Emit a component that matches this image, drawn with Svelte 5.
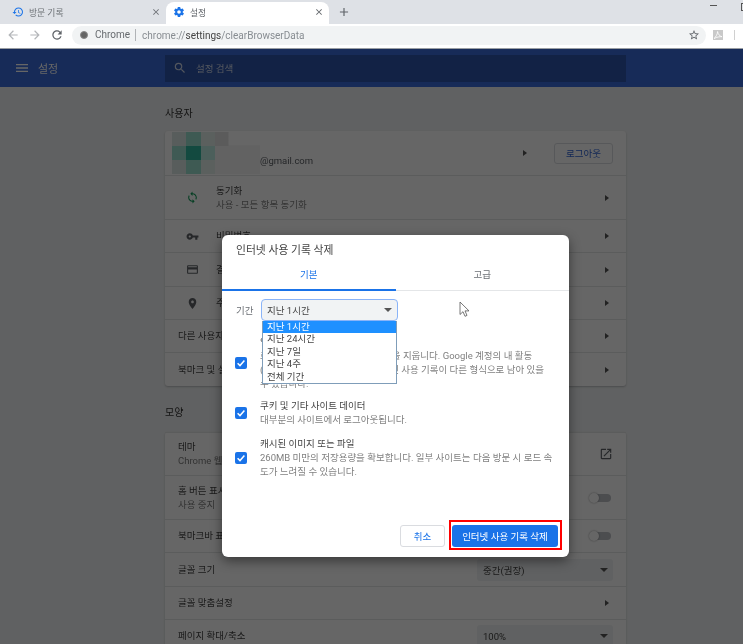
<script>
    const paths = {
        history: "M13 3a9 9 0 0 0-9 9H1l3.89 3.89.07.14L9 12H6c0-3.87 3.13-7 7-7s7 3.13 7 7-3.13 7-7 7c-1.93 0-3.68-.79-4.94-2.06l-1.42 1.42A8.954 8.954 0 0 0 13 21a9 9 0 0 0 0-18zm-1 5v5l4.28 2.54.72-1.21-3.5-2.08V8H12z",
        gear: "M19.43 12.98c.04-.32.07-.64.07-.98s-.03-.66-.07-.98l2.11-1.65c.19-.15.24-.42.12-.64l-2-3.46c-.12-.22-.39-.3-.61-.22l-2.49 1c-.52-.4-1.08-.73-1.69-.98l-.38-2.65C14.46 2.18 14.25 2 14 2h-4c-.25 0-.46.18-.49.42l-.38 2.65c-.61.25-1.17.59-1.69.98l-2.49-1c-.23-.09-.49 0-.61.22l-2 3.46c-.13.22-.07.49.12.64l2.11 1.65c-.04.32-.07.65-.07.98s.03.66.07.98l-2.11 1.65c-.19.15-.24.42-.12.64l2 3.46c.12.22.39.3.61.22l2.49-1c.52.4 1.08.73 1.69.98l.38 2.65c.03.24.24.42.49.42h4c.25 0 .46-.18.49-.42l.38-2.65c.61-.25 1.17-.59 1.69-.98l2.49 1c.23.09.49 0 .61-.22l2-3.46c.12-.22.07-.49-.12-.64l-2.11-1.65zM12 15.5c-1.93 0-3.5-1.57-3.5-3.5s1.57-3.5 3.5-3.5 3.5 1.57 3.5 3.5-1.57 3.5-3.5 3.5z",
        close: "M19 6.41L17.59 5 12 10.59 6.41 5 5 6.41 10.59 12 5 17.59 6.41 19 12 13.41 17.59 19 19 17.59 13.41 12z",
        plus: "M19 13h-6v6h-2v-6H5v-2h6V5h2v6h6v2z",
        back: "M20 11H7.83l5.59-5.59L12 4l-8 8 8 8 1.41-1.41L7.83 13H20v-2z",
        forward: "M12 4l-1.41 1.41L16.17 11H4v2h12.17l-5.58 5.59L12 20l8-8z",
        reload: "M17.65 6.35A7.958 7.958 0 0 0 12 4c-4.42 0-7.99 3.58-7.99 8s3.57 8 7.99 8c3.73 0 6.84-2.55 7.73-6h-2.08A5.99 5.99 0 0 1 12 18c-3.31 0-6-2.69-6-6s2.69-6 6-6c1.66 0 3.14.69 4.22 1.78L13 11h7V4l-2.35 2.35z",
        star: "M22 9.24l-7.19-.62L12 2 9.19 8.63 2 9.24l5.46 4.73L5.82 21 12 17.27 18.18 21l-1.63-7.03L22 9.24zM12 15.4l-3.76 2.27 1-4.28-3.32-2.88 4.38-.38L12 6.1l1.71 4.04 4.38.38-3.32 2.88 1 4.28L12 15.4z",
        menu: "M3 18h18v-2H3v2zm0-5h18v-2H3v2zm0-7v2h18V6H3z",
        search: "M15.5 14h-.79l-.28-.27A6.471 6.471 0 0 0 16 9.5 6.5 6.5 0 1 0 9.5 16c1.61 0 3.09-.59 4.23-1.57l.27.28v.79l5 4.99L20.49 19l-4.99-5zm-6 0C7.01 14 5 11.99 5 9.5S7.01 5 9.5 5 14 7.01 14 9.5 11.99 14 9.5 14z",
        sync: "M12 4V1L8 5l4 4V6c3.31 0 6 2.69 6 6 0 1.01-.25 1.97-.7 2.8l1.46 1.46C19.54 15.03 20 13.57 20 12c0-4.42-3.58-8-8-8zm0 14c-3.31 0-6-2.69-6-6 0-1.01.25-1.97.7-2.8L5.24 7.74C4.46 8.97 4 10.43 4 12c0 4.42 3.58 8 8 8v3l4-4-4-4v3z",
        key: "M12.65 10C11.83 7.67 9.61 6 7 6c-3.31 0-6 2.69-6 6s2.69 6 6 6c2.61 0 4.83-1.67 5.65-4H17v4h4v-4h2v-4H12.65zM7 14c-1.1 0-2-.9-2-2s.9-2 2-2 2 .9 2 2-.9 2-2 2z",
        card: "M20 4H4c-1.11 0-1.99.89-1.99 2L2 18c0 1.11.89 2 2 2h16c1.11 0 2-.89 2-2V6c0-1.11-.89-2-2-2zm0 14H4v-6h16v6zm0-10H4V6h16v2z",
        place: "M12 2C8.13 2 5 5.13 5 9c0 5.25 7 13 7 13s7-7.75 7-13c0-3.87-3.13-7-7-7zm0 9.5c-1.38 0-2.5-1.12-2.5-2.5s1.12-2.5 2.5-2.5 2.5 1.12 2.5 2.5-1.12 2.5-2.5 2.5z",
        external: "M19 19H5V5h7V3H5c-1.11 0-2 .9-2 2v14c0 1.1.89 2 2 2h14c1.1 0 2-.9 2-2v-7h-2v7zM14 3v2h3.59l-9.83 9.83 1.41 1.41L19 6.41V10h2V3h-7z"
    };

    const userRows = [
        { h: 44, icon: "sync", title: "동기화", sub: "사용 - 모든 항목 동기화", green: true },
        { h: 33, icon: "key", title: "비밀번호" },
        { h: 34, icon: "card", title: "결제 수단" },
        { h: 33, icon: "place", title: "주소 및 기타" },
        { h: 33, title: "다른 사용자" },
        { h: 34, title: "북마크 및 설정 가져오기" }
    ];

    const lookRows = [
        { h: 43, title: "테마", sub: "Chrome 웹 스토어 열기", right: "external" },
        { h: 44, title: "홈 버튼 표시", sub: "사용 중지", right: "toggle" },
        { h: 33, title: "북마크바 표시", right: "toggle" },
        { h: 34, title: "글꼴 크기", right: "select", value: "중간(권장)" },
        { h: 33, title: "글꼴 맞춤설정" },
        { h: 33, title: "페이지 확대/축소", right: "select", value: "100%" }
    ];

    const periods = ["지난 1시간", "지난 24시간", "지난 7일", "지난 4주", "전체 기간"];

    const mosaic = ["#dce8e6", "#9be0d0", "#e4efec", "#9fe0d2", "#30b9a0", "#bfeee4", "#dce8e6", "#9be0d0", "#e4efec"];
</script>

{#snippet icon(name, cls)}
    <svg class={cls} viewBox="0 0 24 24"><path d={paths[name]} /></svg>
{/snippet}

{#snippet row(item)}
    <div class="row" style="height: {item.h}px">
        {#if item.icon}
            <span class="row-icon" class:green={item.green}>{@render icon(item.icon, "ic13")}</span>
        {/if}
        <div class="row-text">
            <div class="row-title">{item.title}</div>
            {#if item.sub}<div class="row-sub">{item.sub}</div>{/if}
        </div>
        {#if item.right === "external"}
            <span class="row-end">{@render icon("external", "ic14")}</span>
        {:else if item.right === "toggle"}
            <span class="toggle"><i></i></span>
        {:else if item.right === "select"}
            <div class="page-select">{item.value}<b class="caret"></b></div>
        {:else}
            <b class="arrow"></b>
        {/if}
    </div>
{/snippet}

<div class="window">
    <div class="tabstrip">
        <div class="tab">
            <span class="tab-fav">{@render icon("history", "ic12")}</span>
            <span class="tab-name">방문 기록</span>
            {@render icon("close", "ic10")}
        </div>
        <div class="tab active">
            <span class="tab-fav">{@render icon("gear", "ic12")}</span>
            <span class="tab-name">설정</span>
            {@render icon("close", "ic10")}
        </div>
        <span class="new-tab">{@render icon("plus", "ic14")}</span>
        <span class="minimize"></span>
        <span class="maximize"></span>
    </div>

    <div class="toolbar">
        <span class="nav dim">{@render icon("back", "ic14")}</span>
        <span class="nav dim">{@render icon("forward", "ic14")}</span>
        <span class="nav">{@render icon("reload", "ic14")}</span>
        <div class="omnibox">
            <span class="chrome-dot"></span>
            <span class="scheme">Chrome</span>
            <span class="url">chrome://<em>settings</em>/clearBrowserData</span>
            <span class="star">{@render icon("star", "ic12")}</span>
        </div>
        <span class="ext"><svg viewBox="0 0 10 10"><path d="M1 8.5C3 7 4.5 4 4.6 1.5c.3 2.6 2 4.6 4.4 5.2-2-.2-5 .3-8 1.8z" fill="none" stroke="#fff" stroke-width=".8" /></svg></span>
        <span class="kebab"></span>
    </div>

    <div class="page">
        <header class="page-header">
            <span class="hamburger">{@render icon("menu", "ic16")}</span>
            <span class="page-title">설정</span>
            <div class="search">
                {@render icon("search", "ic14")}
                <span>설정 검색</span>
            </div>
        </header>

        <main class="content">
            <h2>사용자</h2>
            <section class="card">
                <div class="account">
                    <div class="mosaic">
                        {#each mosaic as colour}
                            <span style="background: {colour}"></span>
                        {/each}
                    </div>
                    <div class="blot"></div>
                    <span class="email">@gmail.com</span>
                    <b class="arrow"></b>
                    <span class="signout">로그아웃</span>
                </div>
                {#each userRows as item}
                    {@render row(item)}
                {/each}
            </section>

            <h2 class="second">모양</h2>
            <section class="card">
                {#each lookRows as item}
                    {@render row(item)}
                {/each}
            </section>
        </main>

        <div class="scrim"></div>

        <div class="dialog">
            <div class="dialog-title">인터넷 사용 기록 삭제</div>
            <div class="tabs">
                <span class="dialog-tab current">기본</span>
                <span class="dialog-tab">고급</span>
            </div>

            <div class="period">
                <label for="period-select">기간</label>
                <div class="select-wrap">
                    <div class="select" id="period-select">지난 1시간<b class="caret"></b></div>
                    <ul class="options">
                        {#each periods as option, i}
                            <li class:selected={i === 0}>{option}</li>
                        {/each}
                    </ul>
                </div>
            </div>

            <div class="check-row first">
                <span class="check"><svg viewBox="0 0 12 12"><path d="M2.6 6.2l2.4 2.4 4.4-5" fill="none" stroke="#fff" stroke-width="1.5" /></svg></span>
                <div>
                    <div class="check-title">인터넷 사용 기록</div>
                    <div class="check-desc">로그인한 모든 기기에서 방문 기록을 지웁니다. Google 계정의 내 활동<br />(myactivity.google.com)에 인터넷 사용 기록이 다른 형식으로 남아 있을<br />수 있습니다.</div>
                </div>
            </div>
            <div class="check-row cookies">
                <span class="check"><svg viewBox="0 0 12 12"><path d="M2.6 6.2l2.4 2.4 4.4-5" fill="none" stroke="#fff" stroke-width="1.5" /></svg></span>
                <div>
                    <div class="check-title">쿠키 및 기타 사이트 데이터</div>
                    <div class="check-desc">대부분의 사이트에서 로그아웃됩니다.</div>
                </div>
            </div>
            <div class="check-row cache">
                <span class="check"><svg viewBox="0 0 12 12"><path d="M2.6 6.2l2.4 2.4 4.4-5" fill="none" stroke="#fff" stroke-width="1.5" /></svg></span>
                <div>
                    <div class="check-title">캐시된 이미지 또는 파일</div>
                    <div class="check-desc">260MB 미만의 저장용량을 확보합니다. 일부 사이트는 다음 방문 시 로드 속<br />도가 느려질 수 있습니다.</div>
                </div>
            </div>

            <div class="actions">
                <button class="cancel">취소</button>
                <button class="confirm">인터넷 사용 기록 삭제</button>
            </div>
        </div>

        <svg class="cursor" viewBox="0 0 11 17">
            <path d="M1 1v12.5l3-2.8 2 4.6 2-.9-2-4.5h4z" fill="#fff" stroke="#555" stroke-width=".8" />
        </svg>
    </div>
</div>

<style>
    :global(body) {
        margin: 0;
        overflow: hidden;
        background: #636565;
    }
    .window {
        width: 743px;
        height: 644px;
        overflow: hidden;
        font-family: Roboto, "Noto Sans CJK KR", sans-serif;
        color: #444;
        filter: blur(0.3px);
    }
    svg {
        display: block;
        fill: currentColor;
    }
    :global(.ic10) { width: 10px; height: 10px; }
    :global(.ic12) { width: 12px; height: 12px; }
    :global(.ic13) { width: 13px; height: 13px; }
    :global(.ic14) { width: 14px; height: 14px; }
    :global(.ic16) { width: 16px; height: 16px; }

    .tabstrip {
        height: 24px;
        background: #dee1e6;
        display: flex;
        align-items: flex-end;
        position: relative;
    }
    .tab {
        width: 166px;
        height: 22px;
        box-sizing: border-box;
        display: flex;
        align-items: center;
        padding: 0 5px 2px 12px;
        color: #6b6f74;
        font-size: 8.8px;
    }
    .tab.active {
        width: 163px;
        background: #fff;
        border-radius: 8px 8px 0 0;
        color: #5f6368;
        padding-left: 7px;
    }
    .tab-fav {
        color: #1a73e8;
        margin-right: 5px;
    }
    .tab-name {
        flex: 1;
    }
    .new-tab {
        margin: 0 0 5px 8px;
        color: #5f6368;
    }
    .minimize {
        position: absolute;
        left: 710px;
        top: 5px;
        width: 7px;
        height: 1px;
        background: #555;
    }
    .maximize {
        position: absolute;
        left: 741px;
        top: 3px;
        width: 8px;
        height: 6px;
        border: 1px solid #555;
    }

    .toolbar {
        height: 25px;
        box-sizing: border-box;
        background: #fff;
        border-bottom: 1px solid #9a9ea3;
        display: flex;
        align-items: center;
        padding: 0 0 2px 6px;
    }
    .nav {
        width: 14px;
        margin-right: 8px;
        color: #5f6368;
    }
    .nav.dim {
        color: #b4b6b9;
    }
    .omnibox {
        width: 634px;
        height: 19px;
        background: #f1f3f4;
        border-radius: 10px;
        display: flex;
        align-items: center;
        font-size: 10px;
        color: #666a6e;
        box-sizing: border-box;
        padding: 0 6px 0 8px;
    }
    .chrome-dot {
        width: 8px;
        height: 8px;
        border-radius: 50%;
        background: #666;
        border: 1px solid #8a8a8a;
        box-sizing: border-box;
        margin-right: 7px;
    }
    .scheme {
        padding-right: 5px;
        border-right: 1px solid #b0b3b6;
        line-height: 12px;
        margin-right: 6px;
    }
    .url {
        color: #888d92;
        flex: 1;
    }
    .url em {
        font-style: normal;
        color: #444;
    }
    .star {
        color: #5f6368;
    }
    .ext {
        width: 10px;
        height: 10px;
        background: #c9c9c9;
        margin-left: 7px;
    }
    .kebab {
        width: 1px;
        height: 10px;
        background: #d0d0d0;
        margin-left: 11px;
    }

    .page {
        position: relative;
        height: 595px;
        background: #f1f3f4;
        overflow: hidden;
    }
    .page-header {
        height: 38px;
        background: #3b6cdc;
        display: flex;
        align-items: center;
        color: #fff;
    }
    .hamburger {
        margin-left: 14px;
    }
    .page-title {
        font-size: 11px;
        margin-left: 8px;
        width: 127px;
    }
    .search {
        width: 461px;
        height: 27px;
        background: #2d55ac;
        display: flex;
        align-items: center;
        gap: 9px;
        padding-left: 8px;
        box-sizing: border-box;
        font-size: 9.5px;
        color: #cfd8ea;
    }

    .content {
        width: 461px;
        margin-left: 165px;
    }
    h2 {
        margin: 0;
        padding: 18px 0 8px;
        font-size: 10px;
        font-weight: 400;
        line-height: 18px;
        color: #333;
    }
    h2.second {
        padding-bottom: 10px;
    }
    .card {
        background: #fff;
        border-radius: 3px;
        box-shadow: 0 1px 2px rgba(60, 64, 67, 0.3);
    }
    .account {
        height: 44px;
        position: relative;
        display: flex;
        align-items: center;
        padding: 0 13px 0 7px;
        box-sizing: border-box;
    }
    .mosaic {
        display: grid;
        grid-template-columns: repeat(3, 14.3px);
        grid-auto-rows: 14.3px;
    }
    .blot {
        position: absolute;
        left: 50px;
        top: 1px;
        width: 45px;
        height: 42px;
        background: linear-gradient(#e4e4e4 0 14px, #f4f4f4 14px);
        clip-path: polygon(0 0, 30% 0, 30% 33%, 100% 33%, 100% 100%, 0 100%);
    }
    .email {
        margin-left: 45px;
        font-size: 9.5px;
        color: #5f6368;
        flex: 1;
        padding-top: 14px;
    }
    .signout {
        width: 59px;
        height: 21px;
        border: 1px solid #dadce0;
        border-radius: 3px;
        box-sizing: border-box;
        display: flex;
        align-items: center;
        justify-content: center;
        font-size: 9.5px;
        color: #3367d6;
        margin-left: 27px;
    }
    .account .arrow {
        margin-right: 0;
    }
    .row {
        display: flex;
        align-items: center;
        padding: 0 13px;
        box-sizing: border-box;
        border-top: 1px solid #e4e5e6;
    }
    .row-icon {
        width: 30.5px;
        color: #5f6368;
        margin-left: 7.5px;
        flex: none;
    }
    .row-icon.green {
        color: #0f9d58;
    }
    .row-text {
        flex: 1;
        min-width: 0;
    }
    .row-title {
        font-size: 9.5px;
        line-height: 14px;
        color: #444;
    }
    .row-sub {
        font-size: 9.5px;
        line-height: 14px;
        color: #808080;
    }
    .arrow {
        width: 0;
        height: 0;
        border-left: 4px solid #555;
        border-top: 3px solid transparent;
        border-bottom: 3px solid transparent;
        margin-right: 4px;
    }
    .row-end {
        color: #5f6368;
    }
    .toggle {
        width: 21px;
        height: 8px;
        background: #bdc1c6;
        border-radius: 4px;
        position: relative;
        margin-right: 2px;
    }
    .toggle i {
        position: absolute;
        left: -1px;
        top: -1px;
        width: 10px;
        height: 10px;
        border-radius: 50%;
        background: #fff;
        box-shadow: 0 0 2px rgba(0, 0, 0, 0.4);
    }
    .page-select {
        width: 136px;
        height: 22px;
        background: #f1f3f4;
        border-radius: 3px;
        display: flex;
        align-items: center;
        justify-content: space-between;
        padding: 0 4px 0 6px;
        box-sizing: border-box;
        font-size: 9.5px;
        color: #444;
    }
    .caret {
        width: 0;
        height: 0;
        border-top: 4px solid #555;
        border-left: 4px solid transparent;
        border-right: 4px solid transparent;
        margin-right: 1px;
    }

    .scrim {
        position: absolute;
        inset: 0;
        background: rgba(0, 0, 0, 0.6);
    }

    .dialog {
        position: absolute;
        left: 222px;
        top: 186px;
        width: 347px;
        height: 322px;
        background: #fff;
        border-radius: 6px;
        box-shadow: 0 4px 12px rgba(0, 0, 0, 0.45);
        display: flex;
        flex-direction: column;
        color: #444;
    }
    .dialog-title {
        height: 32px;
        line-height: 32px;
        padding-left: 14px;
        font-size: 10.8px;
    }
    .tabs {
        display: flex;
        height: 24px;
        box-sizing: border-box;
        border-bottom: 1px solid #e4e6e8;
    }
    .dialog-tab {
        flex: 1;
        text-align: center;
        font-size: 9.5px;
        line-height: 16px;
        color: #6b6f74;
    }
    .dialog-tab.current {
        color: #1a73e8;
        box-shadow: 0 1px 0 #1a73e8;
        border-bottom: 1px solid #1a73e8;
        height: 23px;
        box-sizing: border-box;
    }
    .period {
        display: flex;
        align-items: center;
        margin: 8px 0 0 14px;
        font-size: 9.5px;
        color: #6b6f74;
    }
    .period label {
        width: 25px;
    }
    .select-wrap {
        position: relative;
    }
    .select {
        width: 137px;
        height: 22px;
        box-sizing: border-box;
        background: #f1f3f4;
        border: 1px solid #8ab4f8;
        border-radius: 4px;
        display: flex;
        align-items: center;
        justify-content: space-between;
        padding: 0 4px 0 5px;
        font-size: 9.5px;
        color: #444;
    }
    .options {
        position: absolute;
        z-index: 1;
        left: 1px;
        top: 22px;
        width: 135px;
        box-sizing: border-box;
        margin: 0;
        padding: 0;
        list-style: none;
        background: #fff;
        border: 1px solid #7f9db9;
        border-top: 0;
        font-size: 9.5px;
        line-height: 12.4px;
        color: #444;
    }
    .options li {
        padding-left: 4px;
    }
    .options li.selected {
        background: #1e90ff;
        color: #fff;
    }
    .check-row {
        display: flex;
        align-items: center;
        margin-left: 13px;
        padding-right: 10px;
    }
    .check-row.first {
        margin-top: 14px;
    }
    .check-row.cookies {
        margin-top: 8px;
    }
    .check-row.cache {
        margin-top: 10px;
    }
    .check {
        width: 12px;
        height: 12px;
        border-radius: 2px;
        background: #1a73e8;
        margin-right: 13px;
        flex: none;
    }
    .check-title {
        font-size: 9.5px;
        line-height: 14px;
        color: #444;
    }
    .check-desc {
        font-size: 9.5px;
        line-height: 14px;
        color: #808080;
    }
    .actions {
        margin-top: auto;
        padding: 0 11px 10px 0;
        display: flex;
        justify-content: flex-end;
        gap: 7px;
    }
    button {
        height: 22px;
        border-radius: 3px;
        font: inherit;
        font-size: 9.5px;
        padding: 0;
    }
    .cancel {
        width: 45px;
        background: #fff;
        border: 1px solid #dadce0;
        color: #1a73e8;
    }
    .confirm {
        width: 106px;
        background: #1a73e8;
        border: 0;
        color: #fff;
        position: relative;
    }
    .confirm::after {
        content: "";
        position: absolute;
        left: -3px;
        right: -4px;
        top: -5px;
        bottom: -3px;
        border: 2.5px solid #f00;
    }
    .cursor {
        position: absolute;
        left: 459px;
        top: 252px;
        width: 11px;
        height: 17px;
    }
</style>
